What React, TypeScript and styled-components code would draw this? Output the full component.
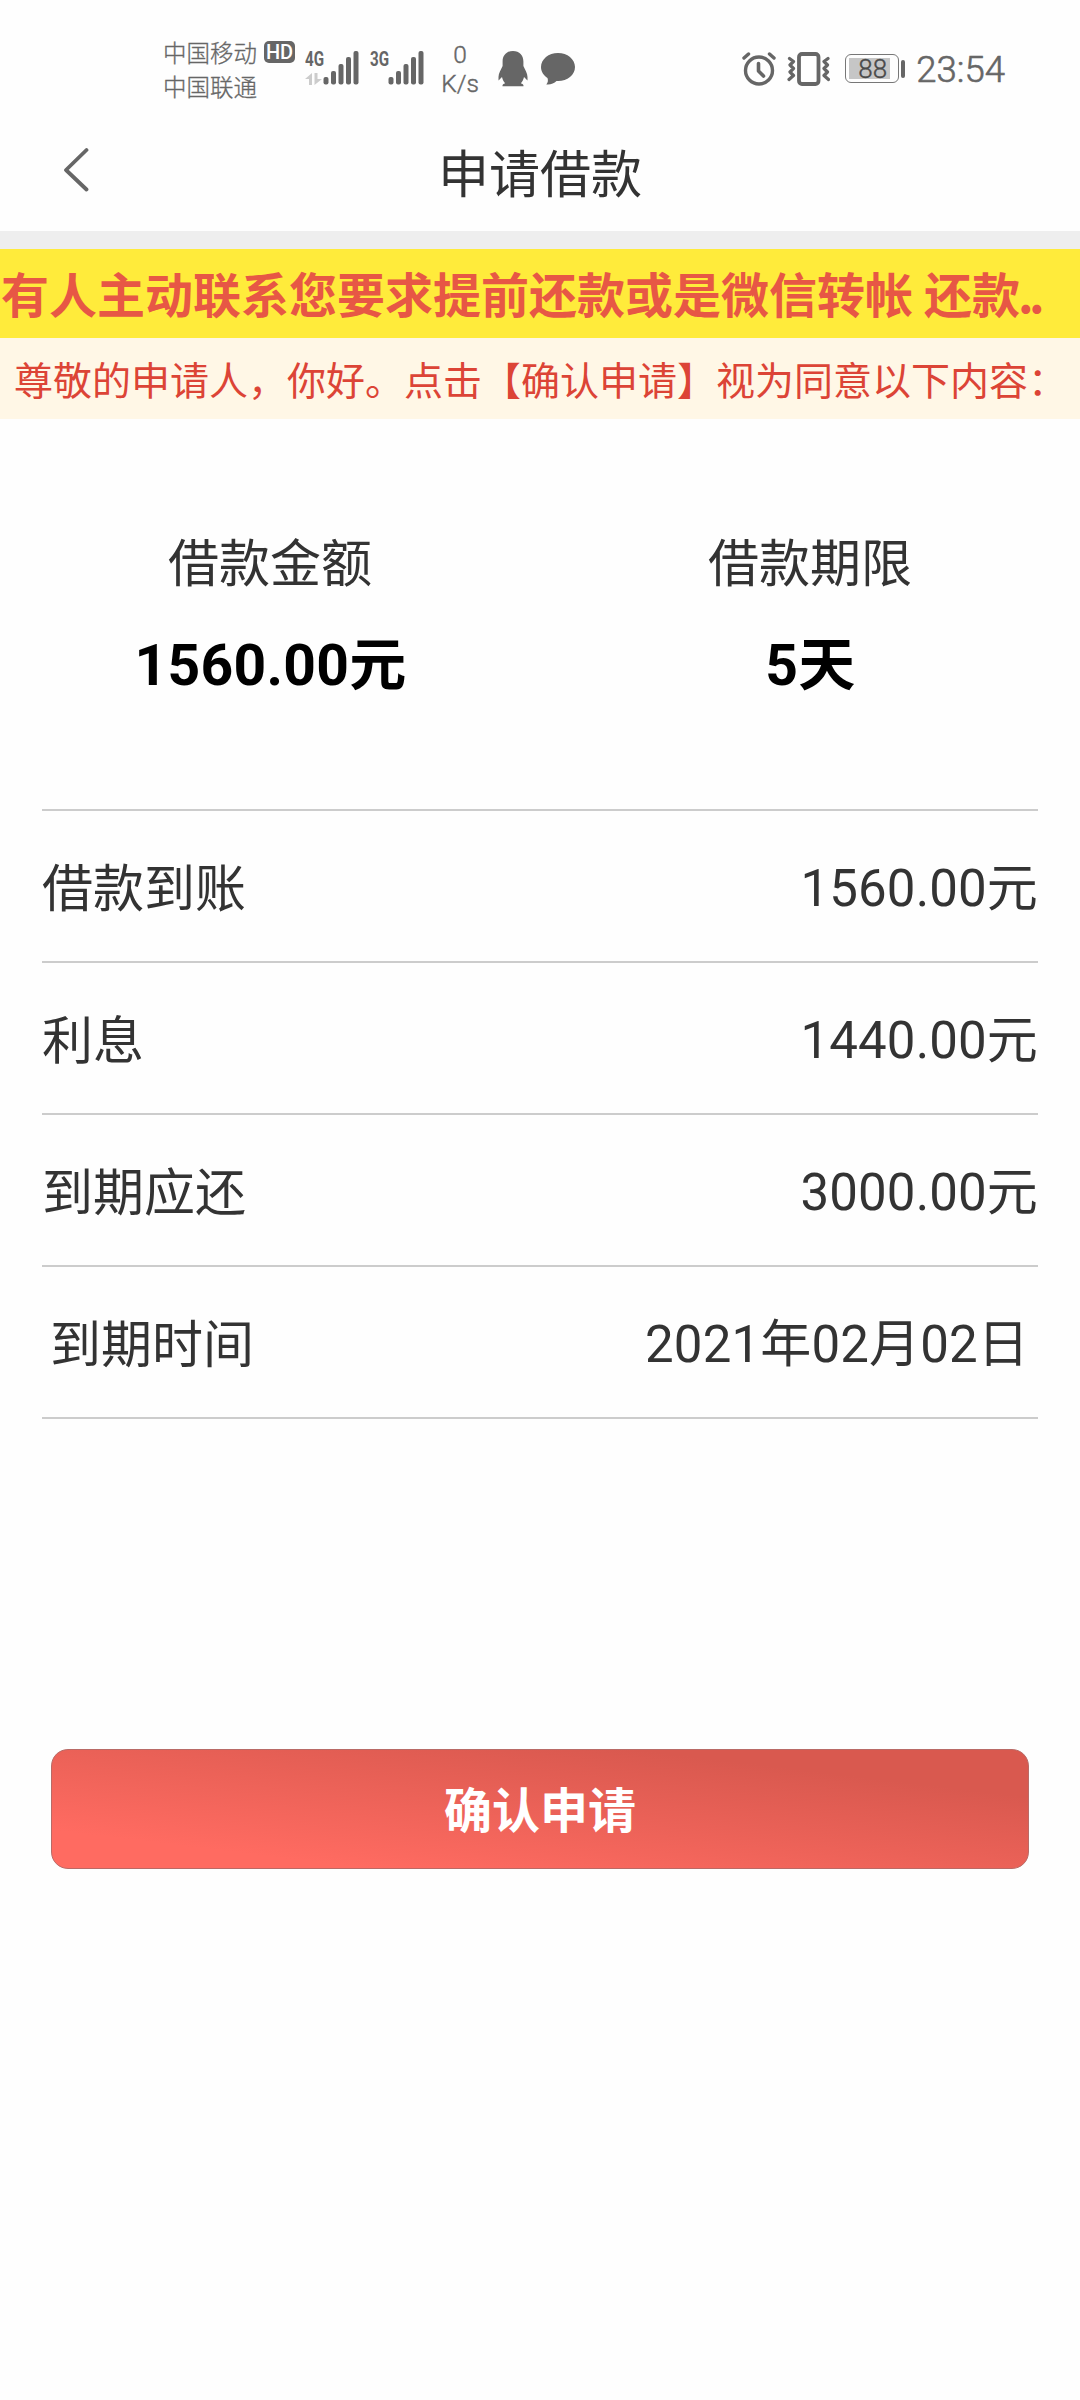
import React from "react";
import styled, { createGlobalStyle } from "styled-components";

const Global = createGlobalStyle`
  * { box-sizing: border-box; }
  body {
    margin: 0;
    background: #fefefe;
    font-family: Roboto, "Noto Sans CJK SC", sans-serif;
    color: #333;
  }
`;

const INK = "#666";

const Screen = styled.div`
  width: 1080px;
  height: 2400px;
  overflow: hidden;
  display: flex;
  flex-direction: column;
  background: #fefefe;
`;

const StatusBar = styled.header`
  height: 120px;
  flex: none;
  padding: 36px 75px 0 163px;
  display: flex;
  justify-content: space-between;
  color: ${INK};
  svg { display: block; flex: none; }
`;

const StatusGroup = styled.div`
  display: flex;
  align-items: flex-start;
`;

const Carriers = styled.div`
  width: 94px;
  margin-top: 1px;
  font-size: 23.5px;
  font-weight: 300;
  line-height: 34px;
  white-space: nowrap;
  -webkit-text-stroke: 0.3px ${INK};
`;

const HdBadge = styled.span`
  width: 31px;
  height: 22px;
  margin: 5px 0 0 7px;
  border-radius: 5px;
  background: ${INK};
  color: #fff;
  font-size: 20px;
  font-weight: 500;
  line-height: 23px;
  text-align: center;
`;

const Network = styled.div<{ $gap: number }>`
  width: 54px;
  height: 34px;
  margin: 15px 0 0 ${(p) => p.$gap}px;
  display: flex;
  justify-content: space-between;
`;

const NetworkType = styled.div`
  width: 18px;
  display: flex;
  flex-direction: column;
  justify-content: space-between;
  font-size: 20px;
  font-weight: 700;
  line-height: 16px;
`;

const Condensed = styled.span`
  display: block;
  width: 25px;
  transform: scaleX(0.76);
  transform-origin: 0 0;
`;

const Speed = styled.div`
  width: 40px;
  margin: 5px 0 0 16px;
  font-size: 24.5px;
  font-weight: 300;
  line-height: 28.5px;
  text-align: center;
  -webkit-text-stroke: 0.4px ${INK};
`;

const Slot = styled.div<{ $left: number; $top: number }>`
  margin: ${(p) => p.$top}px 0 0 ${(p) => p.$left}px;
`;

const Battery = styled.div`
  display: flex;
  align-items: center;
  gap: 2px;
  margin: 18px 0 0 15px;
`;

const BatteryBody = styled.div`
  width: 54px;
  height: 29px;
  padding: 3px 8px 3px 3px;
  border: 1.5px solid #777;
  border-radius: 6px;
`;

const BatteryFill = styled.div`
  height: 21px;
  padding-left: 9px;
  background: #c6c6c6;
  color: #4a4a4a;
  font-size: 26px;
  line-height: 22px;
  font-weight: 300;
  -webkit-text-stroke: 0.4px #4a4a4a;
`;

const BatteryCap = styled.div`
  width: 4px;
  height: 18px;
  border-radius: 2px;
  background: ${INK};
`;

const Clock = styled.div`
  margin: 13px 0 0 11px;
  font-size: 36.5px;
  font-weight: 300;
  line-height: 42px;
  -webkit-text-stroke: 0.6px ${INK};
`;

const NavBar = styled.nav`
  height: 111px;
  flex: none;
  display: grid;
  grid-template-columns: 1fr auto 1fr;
  svg { display: block; margin: 27px 0 0 63px; }
`;

const Title = styled.h1`
  margin: 19px 0 0;
  font-size: 51px;
  font-weight: 400;
  line-height: 74px;
`;

const Divider = styled.div`
  height: 18px;
  flex: none;
  background: #eee;
`;

const Marquee = styled.div`
  height: 89px;
  flex: none;
  overflow: hidden;
  padding-left: 1px;
  background: #ffeb3b;
  color: #e75745;
  font-family: "Noto Sans CJK SC", sans-serif;
  font-size: 48px;
  font-weight: 700;
  line-height: 87px;
  white-space: nowrap;
`;

const Dots = styled.span`
  margin-left: -2px;
  letter-spacing: -4.5px;
`;

const Notice = styled.div`
  height: 81px;
  flex: none;
  padding-left: 14px;
  background: #fff7e6;
  color: #dc4436;
  font-family: "Noto Sans CJK SC", sans-serif;
  font-size: 39px;
  line-height: 80px;
  white-space: nowrap;
  text-spacing-trim: space-all;
`;

const Summary = styled.section`
  height: 390px;
  flex: none;
  padding-top: 109px;
  display: grid;
  grid-template-columns: 1fr 1fr;
  text-align: center;
`;

const SummaryLabel = styled.div`
  font-size: 51px;
  line-height: 74px;
`;

const SummaryValue = styled.div`
  margin-top: 22px;
  padding-left: 1px;
  color: #000;
  font-size: 57px;
  font-weight: 700;
  line-height: 84px;
  letter-spacing: 0.3px;
`;

const Details = styled.section`
  margin: 0 42px;
  border-top: 2px solid #ccc;
`;

const DetailRow = styled.div<{ $inset?: boolean }>`
  height: 152px;
  padding: ${(p) => (p.$inset ? "0 9px 0 8px" : "0")};
  display: flex;
  justify-content: space-between;
  border-bottom: 2px solid #ccc;
  font-size: 51px;
`;

const DetailLabel = styled.span`
  line-height: 158px;
`;

const DetailValue = styled.span`
  line-height: 156px;
  letter-spacing: 0.15px;
`;

const Confirm = styled.button`
  width: 978px;
  height: 120px;
  flex: none;
  margin: 330px 51px 0;
  padding: 0 0 3px;
  border: 1px solid #b96a66;
  border-radius: 17px;
  background: linear-gradient(to top right, #ff6b61 16%, #d9594f 80%);
  color: #fff;
  font-family: "Noto Sans CJK SC", sans-serif;
  font-size: 48px;
  font-weight: 700;
  line-height: 115px;
`;

const SignalBars = () => (
  <svg width="36" height="34" viewBox="0 0 36 34" fill={INK}>
    <rect x="0.5" y="26" width="5" height="7.5" rx="2" />
    <rect x="8" y="20" width="5" height="13.5" rx="2" />
    <rect x="15.5" y="13" width="5" height="20.5" rx="2" />
    <rect x="23" y="6" width="5" height="27.5" rx="2" />
    <rect x="30.5" y="0" width="5" height="33.5" rx="2" />
  </svg>
);

const DataArrows = () => (
  <svg width="17" height="12" viewBox="0 0 17 12" fill="#ccc">
    <path d="M7 0v12H4V6H0z" />
    <path d="M9.5 12V0h3v6H17z" />
  </svg>
);

const Penguin = () => (
  <svg width="30" height="36" viewBox="0 0 30 36" fill={INK}>
    <path d="M15 0C8.500 0 4.600 4.500 4.600 10.500V15C3 18.500 0.500 22.500 0.500 26V29.500L4 26C4.500 28.500 5.600 30.700 7.200 32.200C5.200 32.800 4.300 33.700 4.500 35.200H25.500C25.700 33.700 24.800 32.800 22.800 32.200C24.400 30.700 25.500 28.500 26 26L29.500 29.500V26C29.500 22.500 27 18.500 25.400 15V10.500C25.400 4.500 21.500 0 15 0Z" />
  </svg>
);

const Bubble = () => (
  <svg width="34" height="33" viewBox="0 0 34 33" fill={INK}>
    <path d="M17 0C7.600 0 0 6.200 0 14C0 18.500 2.500 22.500 6.500 25C7.300 27.500 7 29.500 5.300 31.500C9.500 32 13 30.500 15.500 28C25.500 28.700 34 22.500 34 14C34 6.200 26.400 0 17 0Z" />
  </svg>
);

const Alarm = () => (
  <svg width="34" height="34" viewBox="0 0 34 34" fill="none" stroke={INK} strokeWidth="3.400" strokeLinecap="round" strokeLinejoin="round">
    <circle cx="17" cy="18.500" r="13.500" />
    <path d="M16.500 11.500v7.500l5 5" strokeWidth="3.600" />
    <path d="M2 6L6.500 2M32 6L27.500 2" />
  </svg>
);

const Vibrate = () => (
  <svg width="43" height="34" viewBox="0 0 43 34" fill="none" stroke={INK} strokeLinejoin="round" strokeLinecap="round">
    <rect x="12" y="2" width="19.500" height="30" rx="3" strokeWidth="3.800" />
    <path d="M2.500 6.500L6.500 9.500L3 13L6.500 16.500L3 20L6.500 23.500L2 27.500M41 6.500L37 9.500L40.500 13L37 16.500L40.500 20L37 23.500L41.500 27.500" strokeWidth="3.200" />
  </svg>
);

const BackArrow = () => (
  <svg width="26" height="46" viewBox="0 0 26 46" fill="none" stroke="#666" strokeWidth="3.800" strokeLinecap="round" strokeLinejoin="round">
    <path d="M23.500 3L3 23L23.500 42.500" />
  </svg>
);

const rows = [
  { label: "借款到账", value: "1560.00元" },
  { label: "利息", value: "1440.00元" },
  { label: "到期应还", value: "3000.00元" },
  { label: "到期时间", value: "2021年02月02日", inset: true },
];

export default function App() {
  return (
    <Screen lang="zh-CN">
      <Global />
      <StatusBar>
        <StatusGroup>
          <Carriers>
            <div>中国移动</div>
            <div>中国联通</div>
          </Carriers>
          <HdBadge>HD</HdBadge>
          <Network $gap={10}>
            <NetworkType>
              <Condensed>4G</Condensed>
              <DataArrows />
            </NetworkType>
            <SignalBars />
          </Network>
          <Network $gap={11}>
            <NetworkType>
              <Condensed>3G</Condensed>
            </NetworkType>
            <SignalBars />
          </Network>
          <Speed>
            <div>0</div>
            <div>K/s</div>
          </Speed>
          <Slot $left={18} $top={15}><Penguin /></Slot>
          <Slot $left={13} $top={17}><Bubble /></Slot>
        </StatusGroup>
        <StatusGroup>
          <Slot $left={0} $top={16}><Alarm /></Slot>
          <Slot $left={11} $top={16}><Vibrate /></Slot>
          <Battery>
            <BatteryBody><BatteryFill>88</BatteryFill></BatteryBody>
            <BatteryCap />
          </Battery>
          <Clock>23:54</Clock>
        </StatusGroup>
      </StatusBar>
      <NavBar>
        <BackArrow />
        <Title>申请借款</Title>
      </NavBar>
      <Divider />
      <Marquee>
        有人主动联系您要求提前还款或是微信转帐 还款<Dots>..</Dots>
      </Marquee>
      <Notice>尊敬的申请人，你好。点击【确认申请】视为同意以下内容：</Notice>
      <Summary>
        <div>
          <SummaryLabel>借款金额</SummaryLabel>
          <SummaryValue>1560.00元</SummaryValue>
        </div>
        <div>
          <SummaryLabel>借款期限</SummaryLabel>
          <SummaryValue>5天</SummaryValue>
        </div>
      </Summary>
      <Details>
        {rows.map((r) => (
          <DetailRow key={r.label} $inset={r.inset}>
            <DetailLabel>{r.label}</DetailLabel>
            <DetailValue>{r.value}</DetailValue>
          </DetailRow>
        ))}
      </Details>
      <Confirm>确认申请</Confirm>
    </Screen>
  );
}
